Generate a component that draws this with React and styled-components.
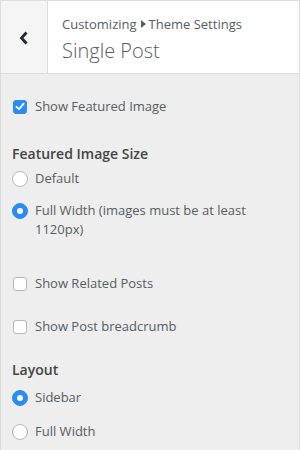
import React from "react";
import styled, { createGlobalStyle } from "styled-components";

const GlobalStyle = createGlobalStyle`
    html, body {
        margin: 0;
        padding: 0;
        background: #eeeeee;
    }
    * {
        box-sizing: border-box;
    }
`;

const Panel = styled.div`
    width: 300px;
    height: 450px;
    background: #eeeeee;
    border: 1px solid #dddddd;
    border-bottom: none;
    font-family: "Open Sans", "Noto Sans", sans-serif;
    color: #555d66;
    overflow: hidden;
`;

const Header = styled.div`
    display: flex;
    height: 73px;
    background: #ffffff;
    border-bottom: 1px solid #dddddd;
`;

const BackButton = styled.div`
    width: 47px;
    flex-shrink: 0;
    display: flex;
    align-items: center;
    justify-content: center;
    background: #f5f5f5;
    border-right: 1px solid #dddddd;
    padding-top: 2px;
`;

const Titles = styled.div`
    display: flex;
    flex-direction: column;
    padding: 13px 0 0 14px;
`;

const Crumb = styled.div`
    display: flex;
    align-items: center;
    font-size: 13px;
    line-height: 20px;
    color: #555d66;

    svg {
        margin: 0 3px 0 4px;
    }
`;

const Title = styled.div`
    font-size: 20px;
    font-weight: 300;
    line-height: 28px;
    color: #555d66;
    margin-top: 3px;
`;

const Body = styled.div`
    display: flex;
    flex-direction: column;
    padding: 23px 12px 0 11px;
`;

const Heading = styled.div`
    font-size: 14px;
    font-weight: 600;
    line-height: 20px;
    color: #444;
    margin-top: ${({ $top }) => $top}px;
`;

const Option = styled.label`
    display: flex;
    align-items: flex-start;
    gap: 7px;
    font-size: 13px;
    line-height: 19px;
    margin-top: ${({ $top }) => $top || 0}px;
`;

const Mark = styled.span`
    width: 16px;
    height: 19px;
    flex-shrink: 0;
    display: flex;
    align-items: center;
    justify-content: center;
`;

const Box = styled.span`
    width: 14px;
    height: 14px;
    border-radius: 3px;
    display: flex;
    align-items: center;
    justify-content: center;
    background: ${({ $on }) => ($on ? "#2b8cf5" : "#ffffff")};
    border: 1px solid ${({ $on }) => ($on ? "#2b8cf5" : "#b4b9be")};
`;

const Radio = styled.span`
    width: 16px;
    height: 16px;
    border-radius: 50%;
    display: flex;
    align-items: center;
    justify-content: center;
    background: ${({ $on }) => ($on ? "#2b8cf5" : "#ffffff")};
    border: 1px solid ${({ $on }) => ($on ? "#2b8cf5" : "#b4b9be")};

    &::after {
        content: "";
        display: ${({ $on }) => ($on ? "block" : "none")};
        width: 6px;
        height: 6px;
        border-radius: 50%;
        background: #ffffff;
    }
`;

const Checkbox = ({ on, top, children }) => (
    <Option $top={top}>
        <Mark>
            <Box $on={on}>
                {on && (
                    <svg width="10" height="9" viewBox="0 0 10 9">
                        <path d="M1.5 4.8 L4 7.2 L8.6 1.6" fill="none" stroke="#fff" strokeWidth="1.8" strokeLinecap="round" strokeLinejoin="round" />
                    </svg>
                )}
            </Box>
        </Mark>
        <span>{children}</span>
    </Option>
);

const RadioOption = ({ on, top, children }) => (
    <Option $top={top}>
        <Mark>
            <Radio $on={on} />
        </Mark>
        <span>{children}</span>
    </Option>
);

const App = () => {
    return (
        <>
            <GlobalStyle />
            <Panel>
                <Header>
                    <BackButton>
                        <svg width="10" height="14" viewBox="0 0 10 14">
                            <path d="M7.5 1.5 L2.5 7 L7.5 12.5" fill="none" stroke="#23282d" strokeWidth="2.8" />
                        </svg>
                    </BackButton>
                    <Titles>
                        <Crumb>
                            Customizing
                            <svg width="5" height="8" viewBox="0 0 5 8">
                                <path d="M0 0 L5 4 L0 8 Z" fill="#555d66" />
                            </svg>
                            Theme Settings
                        </Crumb>
                        <Title>Single Post</Title>
                    </Titles>
                </Header>
                <Body>
                    <Checkbox on>Show Featured Image</Checkbox>
                    <Heading $top={28}>Featured Image Size</Heading>
                    <RadioOption top={5}>Default</RadioOption>
                    <RadioOption on top={13}>
                        Full Width (images must be at least 1120px)
                    </RadioOption>
                    <Checkbox top={35}>Show Related Posts</Checkbox>
                    <Checkbox top={24}>Show Post breadcrumb</Checkbox>
                    <Heading $top={24}>Layout</Heading>
                    <RadioOption on top={8}>Sidebar</RadioOption>
                    <RadioOption top={15}>Full Width</RadioOption>
                </Body>
            </Panel>
        </>
    );
};

export default App;
